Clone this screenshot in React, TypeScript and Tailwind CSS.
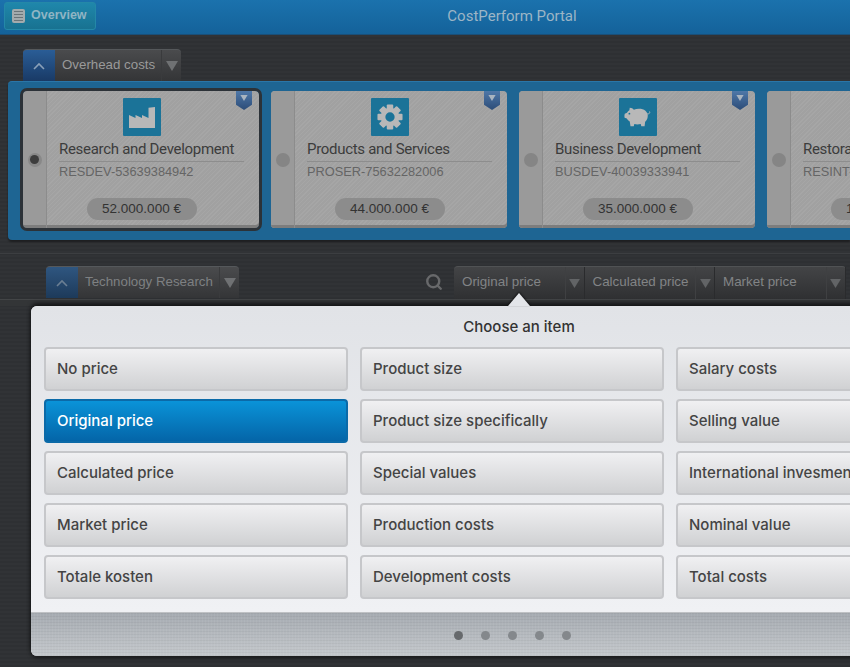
import React from "react";
import { Search } from "lucide-react";

const Caret = ({ className = "" }: { className?: string }) => (
  <svg width="12" height="10" viewBox="0 0 12 10" className={className}>
    <path d="M0 0H12L6 10Z" fill="currentColor" />
  </svg>
);

const Chevron = ({ className = "" }: { className?: string }) => (
  <svg width="12" height="8" viewBox="0 0 12 8" className={className} fill="none" stroke="currentColor" strokeWidth="1.6">
    <path d="M1 7L6 2L11 7" />
  </svg>
);

const Factory = () => (
  <svg width="26" height="21" viewBox="0 0 26 21" fill="#b8b8b8">
    <path d="M0 21V8L6.5 11V8L13 11V8L19.5 11V0.8L26 0V21Z" />
  </svg>
);

const Gear = () => {
  const teeth = [0, 45, 90, 135, 180, 225, 270, 315];
  return (
    <svg width="26" height="26" viewBox="0 0 28 28" fill="#b8b8b8">
      {teeth.map((a) => (
        <rect key={a} x="10.5" y="0.5" width="7" height="7" rx="1" transform={`rotate(${a} 14 14)`} />
      ))}
      <path fillRule="evenodd" d="M14 4a10 10 0 1 0 0 20a10 10 0 1 0 0-20ZM14 9a5 5 0 1 1 0 10a5 5 0 1 1 0-10Z" />
    </svg>
  );
};

const Piggy = () => (
  <svg width="28" height="22" viewBox="0 0 30 24" fill="#b8b8b8">
    <path d="M6 2C8 2 9.5 3 10.5 4C13 3 17 2.8 20 3.6C22 4.2 24.5 6 25.4 8.6C25.8 9.8 25.8 11.4 25.4 12.8C25 14.6 24 16.2 22.8 17.2L22.2 22H18.6L18 19.6C15.6 20.2 13 20.2 11 19.6L10.4 22H6.8L6 17C4.4 16 3.4 14.6 2.8 13.6L0.4 12.8C0.1 11.4 0.1 9.6 0.6 8.4L3 7.4C3.6 6.2 4.6 5.2 5.6 4.6Z" />
    <path d="M25 8.6C27 9 28.4 7.6 27.6 6" fill="none" stroke="#b8b8b8" strokeWidth="1" />
    <circle cx="5.6" cy="8.4" r="1" fill="#1b7398" />
  </svg>
);

const hatch =
  "bg-[repeating-linear-gradient(135deg,#a6a6a6_0px,#a6a6a6_1px,#a1a1a1_1px,#a1a1a1_3px)]";

const Card = ({
  title,
  code,
  price,
  icon,
  selected = false,
}: {
  title: string;
  code: string;
  price: string;
  icon: React.ReactNode;
  selected?: boolean;
}) => (
  <div
    className={`relative shrink-0 w-[236px] h-[137px] flex rounded-[4px] overflow-hidden ${hatch} ${
      selected ? "outline-[3px] outline-[#2c3238]" : ""
    } shadow-[inset_0_-3px_0_#7d7d7d]`}
  >
    <div className="w-[24px] shrink-0 flex items-center justify-center bg-[#9a9a9a] border-r border-[#8c8c8c] shadow-[inset_0_-3px_0_#7d7d7d]">
      {selected ? (
        <div className="w-[14px] h-[14px] rounded-full bg-[#888888] flex items-center justify-center">
          <div className="w-[9px] h-[9px] rounded-full bg-[#3d3d3d]" />
        </div>
      ) : (
        <div className="w-[14px] h-[14px] rounded-full bg-[#858585]" />
      )}
    </div>
    <div className="flex-1 min-w-0 flex flex-col items-center pt-[7px] pl-[12px] pr-[15px]">
      <div className="w-[38px] h-[38px] mr-[20px] shrink-0 rounded-[1px] bg-[#1b7398] flex items-center justify-center">
        {icon}
      </div>
      <div className="w-full mt-[2px] h-[24px] border-b border-[#8d8d8d] font-['Roboto',sans-serif] text-[15px] tracking-[-0.3px] leading-[22px] text-[#3c3c3c] whitespace-nowrap overflow-hidden">
        {title}
      </div>
      <div className="w-full h-[20px] font-['Liberation_Sans',sans-serif] text-[12.8px] leading-[20px] text-[#656565] whitespace-nowrap">
        {code}
      </div>
      <div className="mt-[16px] mr-[20px] w-[110px] h-[22px] rounded-full bg-[#8c8c8c] flex items-center justify-center font-['Liberation_Sans',sans-serif] text-[13.5px] text-[#333333] whitespace-nowrap">
        {price}
      </div>
    </div>
    <div className="absolute top-0 right-[7px] w-[16px] h-[19px] flex items-start justify-center pt-[4px] bg-[linear-gradient(#4f78a8,#2c4c78)] [clip-path:polygon(0_0,100%_0,100%_72%,50%_100%,0_72%)] text-[#a9b4c0]">
      <Caret className="w-[8px] h-[6px]" />
    </div>
  </div>
);

const Tab = ({ label, width, labelWidth, dim = false }: { label: string; width: string; labelWidth: string; dim?: boolean }) => (
  <div
    className={`flex ${width} h-[32px] rounded-t-[4px] overflow-hidden border-t border-[#55585b] bg-[linear-gradient(#4a4b4d,#343537)] font-['Liberation_Sans',sans-serif] text-[13.3px] ${
      dim ? "text-[#7e8082]" : "text-[#9a9a9a]"
    }`}
  >
    <div
      className={`w-[32px] flex items-center justify-center ${
        dim ? "bg-[linear-gradient(#2f5680,#1d3a5a)] text-[#6b7f93]" : "bg-[linear-gradient(#2a5d96,#193a66)] text-[#8aa0b8]"
      }`}
    >
      <Chevron />
    </div>
    <div className={`${labelWidth} pl-[7px] pb-[2px] flex items-center whitespace-nowrap border-r border-[#3a3b3d]`}>{label}</div>
    <div className="flex-1 flex items-center justify-center text-[#6f7173]">
      <Caret />
    </div>
  </div>
);

const Segment = ({ label }: { label: string }) => (
  <div className="w-[130.5px] shrink-0 h-full flex border-r border-[#2a2b2d]">
    <div className="flex-1 pl-[8px] pb-[2px] flex items-center whitespace-nowrap border-r border-[#3f4042]">{label}</div>
    <div className="w-[18px] flex items-center justify-center text-[#626466]">
      <Caret className="w-[11px] h-[9px]" />
    </div>
  </div>
);

const Option = ({ label, active = false }: { label: string; active?: boolean }) => (
  <div
    className={`w-[304px] h-[44px] shrink-0 rounded-[4px] border-2 pl-[11px] flex items-center whitespace-nowrap font-['Inter',sans-serif] font-medium text-[15px] ${
      active
        ? "border-[#0b6aa8] bg-[linear-gradient(#0a93d8,#0465a8)] text-white"
        : "border-[#c6c7ca] bg-[linear-gradient(#f0f0f2,#d0d1d3)] text-[#444444]"
    }`}
  >
    {label}
  </div>
);

const columns = [
  [
    { label: "No price" },
    { label: "Original price", active: true },
    { label: "Calculated price" },
    { label: "Market price" },
    { label: "Totale kosten" },
  ],
  [
    { label: "Product size" },
    { label: "Product size specifically" },
    { label: "Special values" },
    { label: "Production costs" },
    { label: "Development costs" },
  ],
  [
    { label: "Salary costs" },
    { label: "Selling value" },
    { label: "International invesment" },
    { label: "Nominal value" },
    { label: "Total costs" },
  ],
];

export default function App() {
  return (
    <div className="relative w-[850px] h-[667px] overflow-hidden flex flex-col bg-[repeating-linear-gradient(0deg,#2e3033_0px,#2e3033_2px,#313336_2px,#313336_4px)]">
      <header className="relative shrink-0 h-[35px] bg-[linear-gradient(#1b72ad,#14629a)] border-b border-[#1a4f78] flex items-center">
        <div className="ml-[4px] w-[92px] h-[28px] -mt-[3px] rounded-[3px] border border-[#2488a8] bg-[linear-gradient(#1f87ab,#187291)] flex items-center">
          <div className="ml-[7px] w-[13px] h-[14px] rounded-[2px] bg-[#a3abad] flex flex-col justify-center gap-[2px] px-[2px]">
            <div className="h-px bg-[#6a7478]" />
            <div className="h-px bg-[#6a7478]" />
            <div className="h-px bg-[#6a7478]" />
            <div className="h-px bg-[#6a7478]" />
          </div>
          <span className="ml-[6px] font-['Liberation_Sans',sans-serif] font-bold text-[12.5px] text-[#8fb5c4]">Overview</span>
        </div>
        <div className="absolute inset-x-0 top-[6px] pl-[174px] text-center font-['Roboto',sans-serif] text-[15px] leading-[20px] text-[#9cb5c6]">
          CostPerform Portal
        </div>
      </header>

      <div className="h-[14px] shrink-0" />
      <div className="pl-[23px] shrink-0">
        <Tab label="Overhead costs" width="w-[158px]" labelWidth="w-[107px]" />
      </div>

      <section className="ml-[8px] h-[159px] shrink-0 rounded-l-[4px] bg-[#1e6593] border-t border-[#2a76a8] shadow-[0_2px_2px_rgba(0,0,0,0.4)] pl-[15px] pt-[9px] flex gap-[12px] overflow-hidden">
        <Card title="Research and Development" code="RESDEV-53639384942" price="52.000.000 €" icon={<Factory />} selected />
        <Card title="Products and Services" code="PROSER-75632282006" price="44.000.000 €" icon={<Gear />} />
        <Card title="Business Development" code="BUSDEV-40039333941" price="35.000.000 €" icon={<Piggy />} />
        <Card title="Restoration Interior" code="RESINT-21039334857" price="12.000.000 €" icon={<Gear />} />
      </section>

      <div className="shrink-0 mt-[13px] h-px bg-[#3c3e41]" />
      <div className="shrink-0 mt-[12px] flex items-start pl-[46px]">
        <Tab label="Technology Research" width="w-[193px]" labelWidth="w-[142px]" dim />
        <Search className="ml-[186px] mt-[7px] text-[#68696b]" size={18} strokeWidth={3.2} />
        <div className="ml-[11px] h-[33px] flex rounded-t-[4px] border-t border-[#505254] bg-[linear-gradient(#434446,#2f3032)] font-['Liberation_Sans',sans-serif] text-[13.4px] text-[#828486]">
          <Segment label="Original price" />
          <Segment label="Calculated price" />
          <Segment label="Market price" />
        </div>
      </div>
      <div className="shrink-0 h-[7px] bg-[#333537] border-t border-[#434547]" />

      <div className="absolute left-[31px] top-[306px] w-[900px] h-[350px] rounded-l-[6px] shadow-[0_-3px_4px_rgba(0,0,0,0.6),0_2px_4px_rgba(0,0,0,0.5)] flex flex-col bg-[#e3e5e9]">
        <div className="absolute left-[477px] -top-[13px] drop-shadow-[0_-1px_1px_rgba(0,0,0,0.7)]">
          <div className="w-[22px] h-[13px] bg-[#e3e5e9] [clip-path:polygon(50%_0,100%_100%,0_100%)]" />
        </div>
        <div className="h-[307px] shrink-0 rounded-tl-[6px] bg-[linear-gradient(#e1e3e7,#f0f1f4)] border-b border-[#bfc1c4]">
          <div className="w-[976px] pt-[12px] h-[41px] text-center font-['Inter',sans-serif] font-medium text-[15px] leading-[18px] text-[#333333]">
            Choose an item
          </div>
          <div className="flex gap-[12px] pl-[13px]">
            {columns.map((col, i) => (
              <div key={i} className="flex flex-col gap-[8px]">
                {col.map((o) => (
                  <Option key={o.label} label={o.label} active={"active" in o} />
                ))}
              </div>
            ))}
          </div>
        </div>
        <div className="flex-1 rounded-bl-[6px] bg-[repeating-linear-gradient(90deg,rgba(255,255,255,0.05)_0px,rgba(255,255,255,0.05)_1px,transparent_1px,transparent_3px),repeating-linear-gradient(0deg,rgba(0,0,0,0.04)_0px,rgba(0,0,0,0.04)_1px,transparent_1px,transparent_3px),linear-gradient(#a6abb1,#c4c8cc)] flex items-center gap-[18px] pl-[423px] pt-[1px]">
          <div className="w-[9px] h-[9px] rounded-full bg-[#66696c]" />
          <div className="w-[9px] h-[9px] rounded-full bg-[#84888c]" />
          <div className="w-[9px] h-[9px] rounded-full bg-[#84888c]" />
          <div className="w-[9px] h-[9px] rounded-full bg-[#84888c]" />
          <div className="w-[9px] h-[9px] rounded-full bg-[#84888c]" />
        </div>
      </div>
    </div>
  );
}
